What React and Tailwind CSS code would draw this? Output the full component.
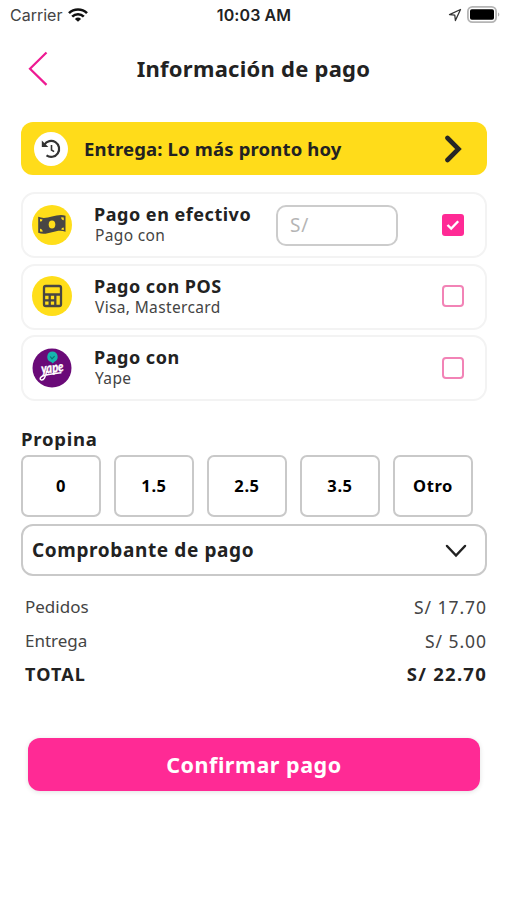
import React from 'react';

const PAYMENT_METHODS = [
  { id: 'cash', title: 'Pago en efectivo', detail: 'Pago con', icon: CashIcon, checked: true, hasAmount: true },
  { id: 'pos', title: 'Pago con POS', detail: 'Visa, Mastercard', icon: CalculatorIcon },
  { id: 'yape', title: 'Pago con', detail: 'Yape', icon: YapeIcon },
];

const TIPS = ['0', '1.5', '2.5', '3.5', 'Otro'];

function CashIcon() {
  return (
    <svg viewBox="0 0 40 40" className="size-10">
      <circle cx="20" cy="20" r="20" fill="#ffde1a" />
      <path d="M6.200 11.800c4.600 2 9.200.9 13.800-.2s9-2.600 13.500-.8v16c-4.500-1.800-9-.7-13.500.5s-9.200 2.500-13.800.5z" fill="#484644" />
      <ellipse cx="20" cy="19.500" rx="3.300" ry="4.100" fill="#ffde1a" />
      <path d="M8 14v2.600a2.600 2.600 0 0 0 2.600-2.200zM31.800 25v-2.600a2.600 2.600 0 0 0-2.600 2.200zM8 26.400v-2.600a2.600 2.600 0 0 1 2.600 3zM31.800 12.400v2.800a2.600 2.600 0 0 1-2.600-3z" fill="#ffde1a" />
    </svg>
  );
}

function CalculatorIcon() {
  return (
    <svg viewBox="0 0 40 40" className="size-10">
      <circle cx="20" cy="20" r="20" fill="#ffde1a" />
      <g fill="none" stroke="#484644" strokeWidth="2.300">
        <rect x="12" y="10" width="17" height="20" rx="1.800" />
        <path d="M12 18.500h17M12 24.300h11.300M17.700 18.500V30M23.300 18.500V30" />
      </g>
    </svg>
  );
}

function YapeIcon() {
  return (
    <svg viewBox="0 0 40 40" className="size-10">
      <circle cx="20" cy="20" r="19.500" fill="#6a0a78" />
      <path d="M20.500 3.500a5.400 5.400 0 0 1 2 10.300l-1.800 1.700-1.500-1.400a5.400 5.400 0 0 1 1.300-10.600z" fill="#16b5ae" />
      <path d="m18.200 8.500 1.800 2.300 2.600-2.700" fill="none" stroke="#08766f" strokeWidth="1.200" />
      <text x="9.500" y="24.500" transform="rotate(-7 20 24)" fill="#fff" stroke="#fff" strokeWidth=".3" fontFamily="Lato, sans-serif" fontSize="14" fontStyle="italic" fontWeight="900" textLength="22.500" lengthAdjust="spacingAndGlyphs">yape</text>
      <path d="M14.500 23.500c-.7 5.500-3 9.300-5.600 8.200-2-1 .5-3.900 4-4.500 5-.9 9-2 16-2.500" fill="none" stroke="#fff" strokeWidth="1.500" strokeLinecap="round" />
    </svg>
  );
}

function StatusBar() {
  return (
    <div className="grid h-[30px] grid-cols-3 items-center pr-[7px] pl-2.5 font-['Inter',sans-serif] text-[#222]">
      <div className="flex items-center gap-1.5">
        <span className="text-[16px] text-[#444]">Carrier</span>
        <svg viewBox="0 0 20 14" className="-mt-px h-3.5 w-5" fill="none" stroke="#111" strokeWidth="2.600">
          <path d="M1 5.200a12.800 12.800 0 0 1 18 0M4.200 8.600a8.300 8.300 0 0 1 11.600 0" />
          <path d="M10 13.800 6.900 10.900a4.500 4.500 0 0 1 6.200 0z" fill="#111" stroke="none" />
        </svg>
      </div>
      <span className="-ml-0.5 text-center text-[16px] font-semibold tracking-[0.100px] whitespace-nowrap">10:03 AM</span>
      <div className="-mt-px flex items-center justify-end gap-[5px]">
        <svg viewBox="0 0 14 14" className="size-3.5" fill="none" stroke="#333" strokeWidth="1.300" strokeLinejoin="round">
          <path d="M12.500 1.500 1.500 6.600l5.300.6.600 5.300z" />
        </svg>
        <svg viewBox="0 0 33 17" className="h-[17px] w-[33px]">
          <rect x=".9" y=".9" width="28.200" height="15.200" rx="4.500" fill="#fff" stroke="#b5b5b5" strokeWidth="1.800" />
          <rect x="3" y="3.300" width="24" height="10.400" rx="1.800" fill="#000" />
          <path d="M31 6.500v4c1.800-.7 1.800-3.300 0-4z" fill="#b5b5b5" />
        </svg>
      </div>
    </div>
  );
}

function Checkbox({ checked }) {
  if (!checked) {
    return <span className="size-[22px] rounded-[4px] border-2 border-[#f283b6]" />;
  }
  return (
    <span className="flex size-[22px] items-center justify-center rounded-[3px] bg-[#ff2a95]">
      <svg viewBox="0 0 14 12" className="h-3 w-3.5" fill="none" stroke="#fff" strokeWidth="2.400">
        <path d="m1.500 6 3.700 3.600 7-7.400" />
      </svg>
    </span>
  );
}

function PaymentCard({ method }) {
  const Icon = method.icon;

  return (
    <div className="flex h-[66px] items-center rounded-[14px] border-2 border-[#f3f3f3] pr-[21px] pb-px pl-[9px]">
      <Icon />
      <div className="ml-[22px] w-[183px] pb-px">
        <p className="text-[18px] leading-[22px] font-bold tracking-[0.520px] whitespace-nowrap text-[#222]">{method.title}</p>
        <p className="pl-px text-[15.500px] leading-5 tracking-[0.350px] text-[#444]">{method.detail}</p>
      </div>
      {method.hasAmount && (
        <div className="mt-px -ml-px flex h-[41px] w-[122px] items-center rounded-[10px] border-2 border-[#ccc] pl-3 text-[19px] tracking-[0.800px] text-[#b5b5b5]">S/</div>
      )}
      <div className="ml-auto flex">
        <Checkbox checked={method.checked} />
      </div>
    </div>
  );
}

export default function App() {
  return (
    <div className="h-[900px] w-[507px] bg-white font-['Noto_Sans',sans-serif] text-[#222]">
      <StatusBar />

      {/* Header */}
      <header className="grid h-[92px] grid-cols-[60px_1fr_60px] items-start pt-[21px]">
        <svg viewBox="0 0 20 36" className="ml-7 h-9 w-5" fill="none" stroke="#ee1a92" strokeWidth="2.200">
          <path d="M18.500 1.500 2 17.700l16.500 16.200" />
        </svg>
        <h1 className="pt-[3px] text-center text-[22px] leading-7 font-bold tracking-[0.250px]">Información de pago</h1>
      </header>

      <main className="mr-5 ml-[21px]">
        {/* Delivery time */}
        <div className="flex h-[53px] items-center rounded-[12px] bg-[#ffdc1a] pr-6 pl-[13px]">
          <span className="flex size-[34px] items-center justify-center rounded-full bg-white">
            <svg viewBox="0 0 20 20" className="size-5" fill="none" stroke="#333" strokeWidth="2.200">
              <path d="M3.300 5.700A8 8 0 1 1 5.500 16.400" />
              <path d="M.8 1.500v6.500h6.500z" fill="#333" stroke="none" />
              <path d="M10.500 6v5l2.600 1.600" strokeWidth="1.600" />
            </svg>
          </span>
          <span className="ml-4 text-[18.500px] font-bold tracking-[0.160px] whitespace-nowrap">Entrega: Lo más pronto hoy</span>
          <svg viewBox="0 0 20 28" className="ml-auto h-7 w-5" fill="none" stroke="#262626" strokeWidth="4.600" strokeLinecap="round">
            <path d="m4.500 3 11 11-11 11" />
          </svg>
        </div>

        {/* Payment methods */}
        <div className="mt-[17px] flex flex-col gap-[5.500px]">
          {PAYMENT_METHODS.map((method) => (
            <PaymentCard key={method.id} method={method} />
          ))}
        </div>

        {/* Tip */}
        <h2 className="mt-6 text-[18.500px] leading-[28px] font-bold tracking-[0.750px]">Propina</h2>
        <div className="mt-0.5 flex gap-[13px]">
          {TIPS.map((tip) => (
            <button key={tip} className="h-[62px] w-20 rounded-[7px] border-2 border-[#c9c9c9] text-[16.500px] font-bold tracking-[0.600px] text-black">
              {tip}
            </button>
          ))}
        </div>

        <div className="mt-[7px] flex h-[52px] items-center justify-between rounded-[12px] border-2 border-[#c9c9c9] pr-[18px] pl-[9px]">
          <span className="text-[19px] font-bold tracking-[0.620px]">Comprobante de pago</span>
          <svg viewBox="0 0 22 14" className="mt-0.5 h-3.5 w-[22px]" fill="none" stroke="#222" strokeWidth="2.500" strokeLinecap="round">
            <path d="m2 2 9 9.500L20 2" />
          </svg>
        </div>

        {/* Totals */}
        <div className="mt-[14px] pl-1 text-[17px] leading-[34px] text-[#444]">
          <div className="flex justify-between">
            <span>Pedidos</span>
            <span className="text-[17.500px] tracking-[0.950px]">S/ 17.70</span>
          </div>
          <div className="flex justify-between">
            <span>Entrega</span>
            <span className="text-[17.500px] tracking-[0.950px]">S/ 5.00</span>
          </div>
          <div className="-mt-px flex justify-between font-bold text-[#222]">
            <span className="text-[18px] tracking-[1.100px]">TOTAL</span>
            <span className="text-[18.500px] tracking-[1.250px]">S/ 22.70</span>
          </div>
        </div>

        <button className="mt-[47px] ml-[7px] h-[53px] w-[452px] rounded-[12px] bg-[#ff2a95] pt-0.5 text-[21.500px] font-bold tracking-[0.520px] text-white shadow-[0_1px_5px_rgba(0,0,0,0.12)]">
          Confirmar pago
        </button>
      </main>
    </div>
  );
}
